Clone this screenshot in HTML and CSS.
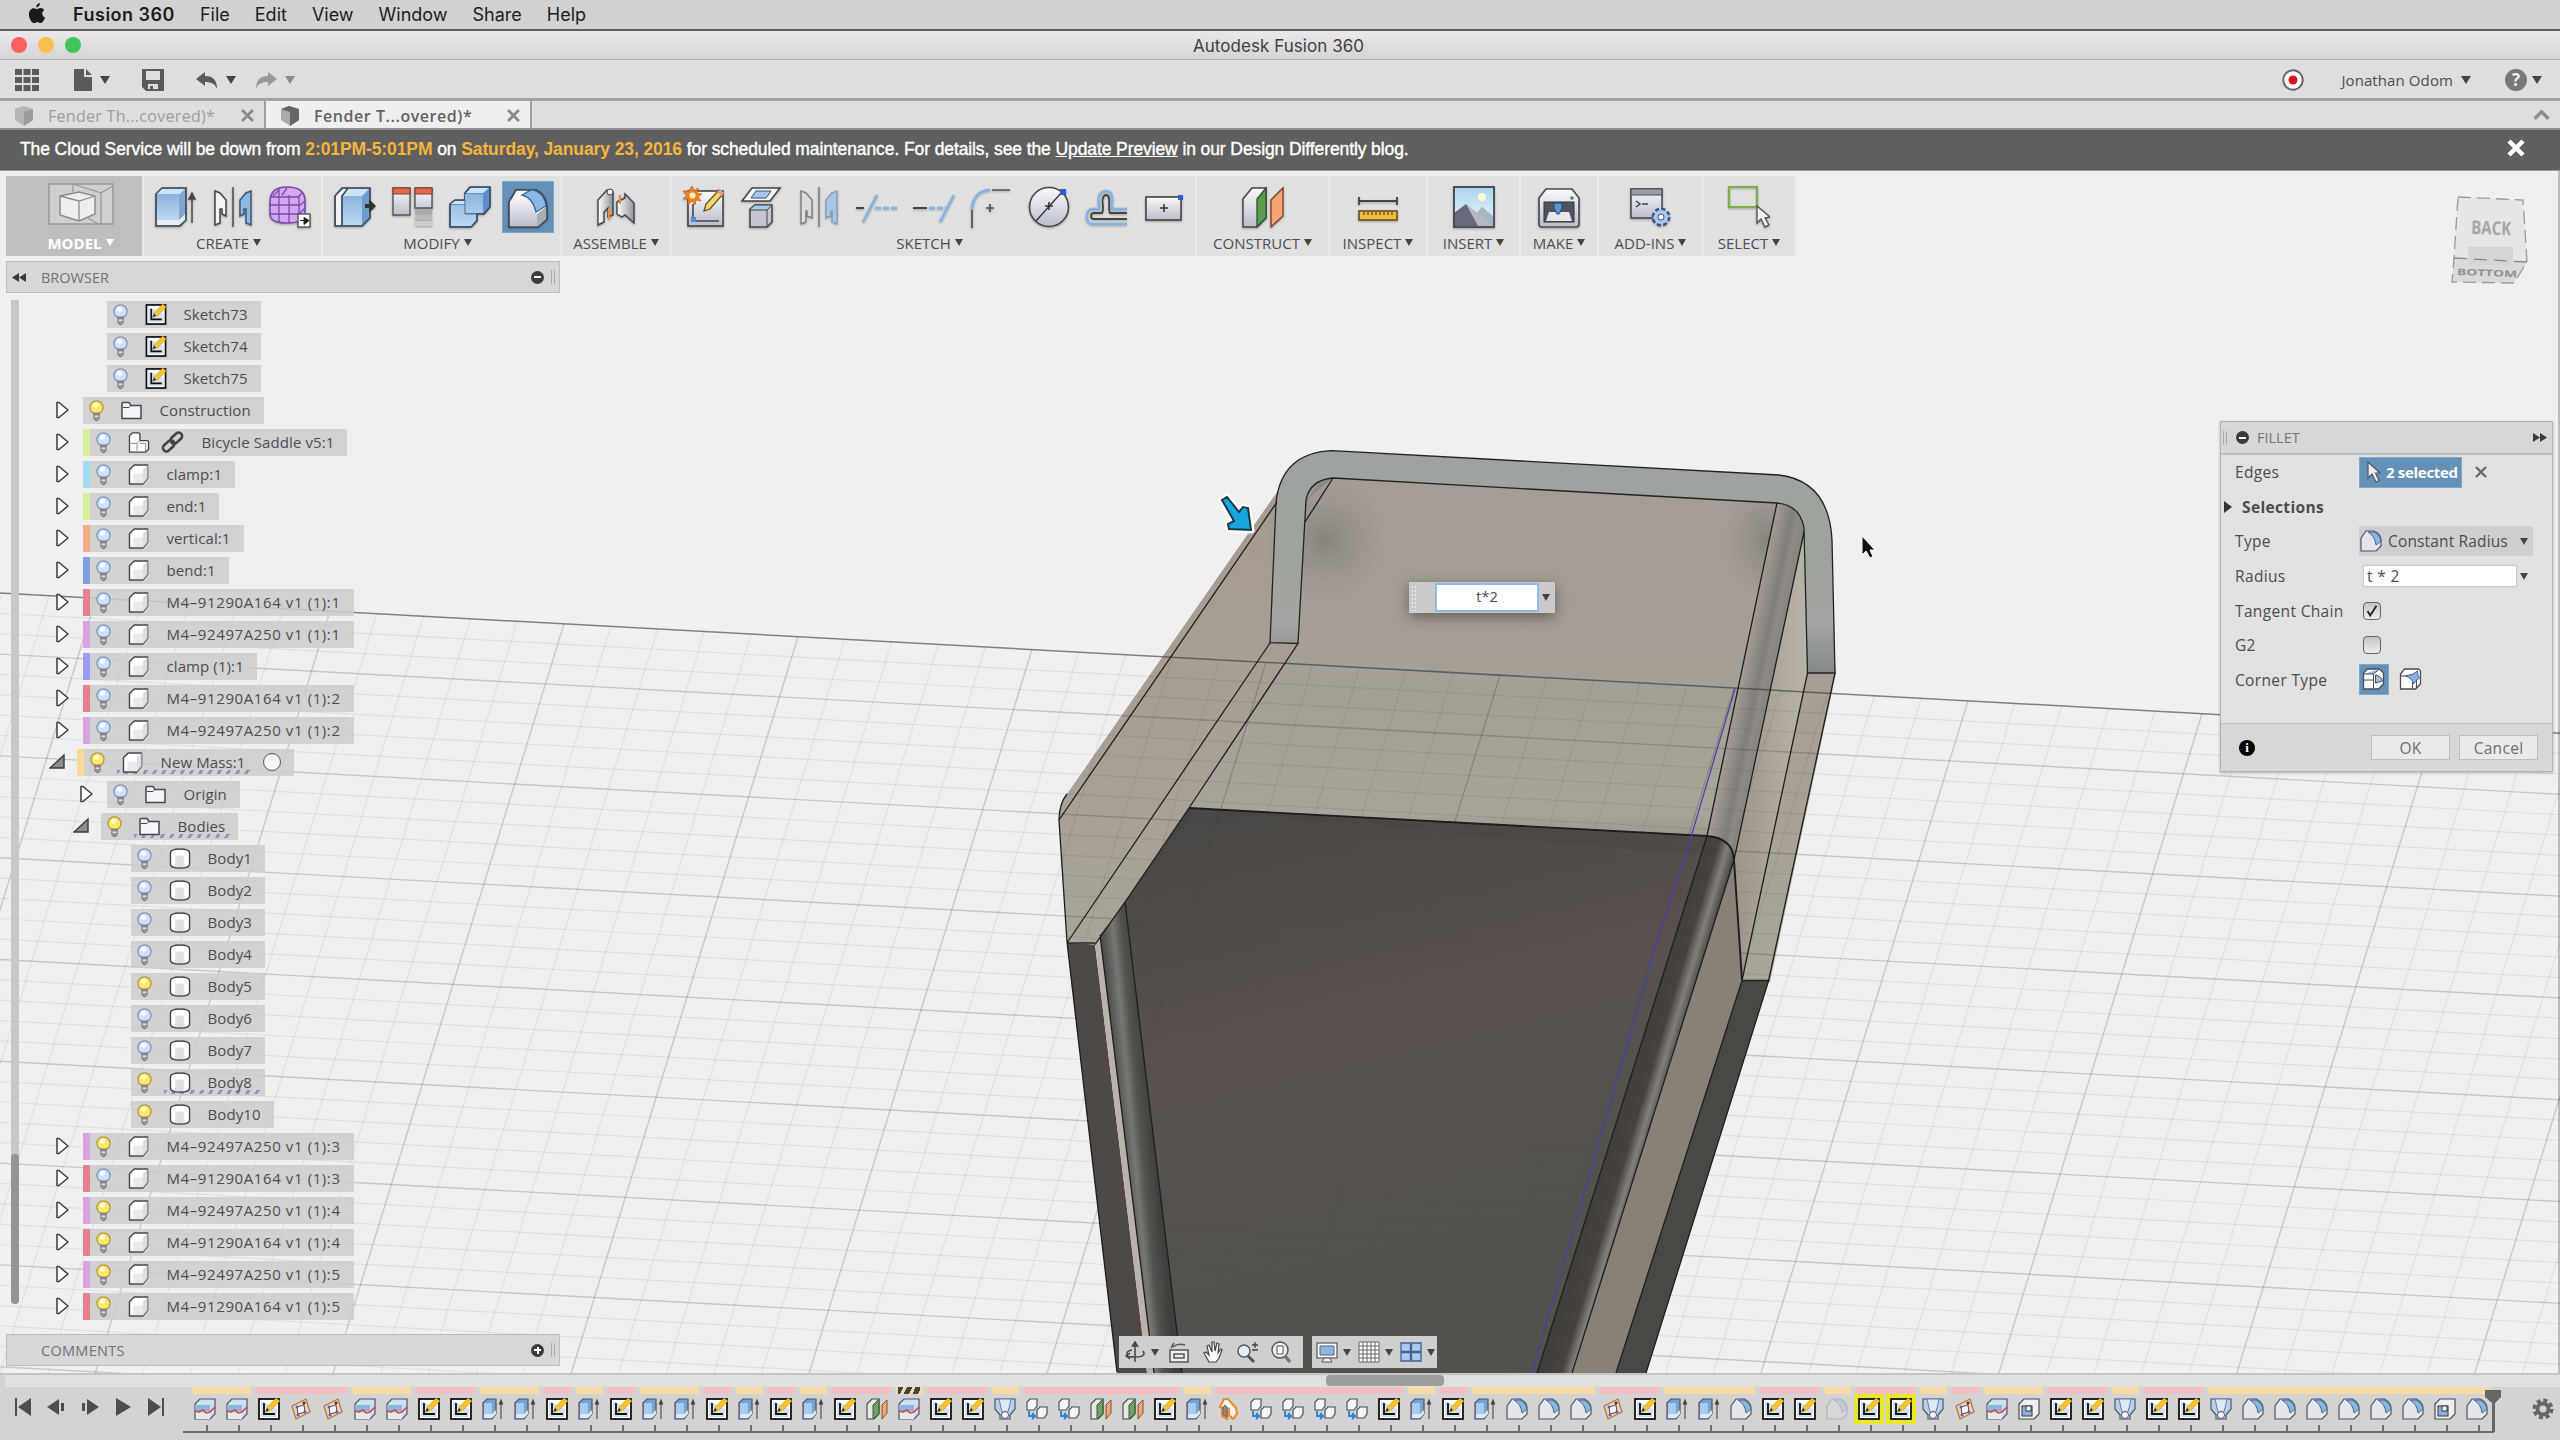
FILE: index.html
```html
<!DOCTYPE html>
<html lang="en">
<head>
    <meta charset="UTF-8">
    <title>Autodesk Fusion 360</title>
    <link rel="stylesheet" href="styles.css">
</head>
<body>
    <!-- shared icons -->
    <svg class="defs" width="0" height="0">
        <defs>
            <linearGradient id="gBlue" x1="0" y1="0" x2="0" y2="1"><stop offset="0" stop-color="#8db4dc"/><stop offset="1" stop-color="#bcd8f2"/></linearGradient>
            <linearGradient id="gGrey" x1="0" y1="0" x2="0" y2="1"><stop offset="0" stop-color="#fbfbfd"/><stop offset="1" stop-color="#b9bdcb"/></linearGradient>
            <linearGradient id="gSteel" x1="0" y1="0" x2="1" y2="0"><stop offset="0" stop-color="#fff"/><stop offset="1" stop-color="#8e939c"/></linearGradient>
            <linearGradient id="gSky" x1="0" y1="0" x2="0" y2="1"><stop offset="0" stop-color="#a9d4ee"/><stop offset="1" stop-color="#eef7fb"/></linearGradient>
        </defs>

        <!-- ribbon, 42px -->
        <symbol id="r-model" viewBox="0 0 66 42">
            <rect x="1" y="1" width="64" height="40" fill="#d0d0d0" stroke="#999" stroke-width="1.5"/>
            <path d="M25 1v8M25 1l28 9v31M53 10l12-7M40 35l10 6" fill="none" stroke="#999" stroke-width="1.3"/>
            <path d="M12 13l19-4 16 4v18l-16 7-19-6z" fill="#eee" stroke="#8c8c8c" stroke-width="1.5"/>
            <path d="M12 13l19 5 16-5M31 18v20" fill="none" stroke="#8c8c8c" stroke-width="1.3"/>
        </symbol>
        <symbol id="r-extrude" viewBox="0 0 42 42">
            <path d="M2 8l6-6h24v32l-6 6H2z" fill="#7fa6d0" stroke="#3c4654" stroke-width="1.6"/>
            <path d="M3 8h22v26H3z" fill="url(#gBlue)"/><path d="M3 8l5-5h23l-5 5z" fill="#cfe3f6"/>
            <path d="M3 34h22l6-6v6l-6 5H3z" fill="#e8eaf0"/>
            <path d="M38 37V8M35 13l3-6 3 6z" fill="#444" stroke="#444" stroke-width="1.4"/>
        </symbol>
        <symbol id="r-mirror" viewBox="0 0 42 42">
            <path d="M3 5l5 2 6 7v16l-4-2v-5H8v14l-5 2z" fill="#f4f5f8" stroke="#444" stroke-width="1.5"/>
            <path d="M39 5l-5 2-6 7v16l4-2v-5h2v14l5 2z" fill="#8fb8e0" stroke="#3c5878" stroke-width="1.5"/>
            <path d="M21 1v40" stroke="#555" stroke-width="1.6"/>
        </symbol>
        <symbol id="r-form" viewBox="0 0 42 42">
            <path d="M1 16C1 6 6 1 18 1s18 5 18 14v10c0 9-6 12-18 12S1 34 1 28z" fill="#d3a8f2" stroke="#7a4ba6" stroke-width="1.6"/>
            <path d="M1 19h29M2 11h27M1 28h29M10 2v34M20 9v28M30 10v24M4 10l6-6M29 11l5-5M30 20l6-5M30 28l6-6M13 9l5-7" fill="none" stroke="#7a4ba6" stroke-width="1.3"/>
            <rect x="29" y="28" width="12" height="13" fill="#fff" stroke="#555" stroke-width="1.4"/><path d="M31 34.5h4v-3l5 3-5 4v-4z" fill="#222" stroke="#222"/>
        </symbol>
        <symbol id="r-presspull" viewBox="0 0 42 42">
            <path d="M1 10l7-8h28v30l-8 8H1z" fill="#6f9ccc" stroke="#3c4654" stroke-width="1.6"/>
            <path d="M2 10h5v29H2zM2 10l7-7h4l-6 7z" fill="#f2f3f6"/><path d="M9 10h19v29H9z" fill="url(#gBlue)"/><path d="M9 10l5-7h21l-7 7z" fill="#cfe3f6"/>
            <path d="M8 40V10l6-8" fill="none" stroke="#3c4654" stroke-width="1.4"/>
            <path d="M31 18h4v-5l7 7-7 7v-5h-4z" fill="#333"/>
        </symbol>
        <symbol id="r-table" viewBox="0 0 42 42">
            <path d="M1 2h17v27H1zM23 2h17v20H23z" fill="url(#gGrey)" stroke="#555" stroke-width="1.4"/>
            <path d="M1 2h17v6H1zM23 2h17v6H23z" fill="#e06a4c" stroke="#8a3b28"/>
            <path d="M23 23h17v5H23z" fill="#aaa"/><path d="M23 29h17v5H23z" fill="#bbb"/><path d="M23 35h17v5H23z" fill="#ccc"/>
        </symbol>
        <symbol id="r-combine" viewBox="0 0 42 42">
            <path d="M1 18l5-4h10V7l5-6h20v20l-6 7h-7v7l-6 6H1z" fill="#5f8fc4" stroke="#34465c" stroke-width="1.6"/>
            <path d="M2 19h14v9h12-1v6l-5 6H2zM16 8h18v19H16z" fill="url(#gBlue)"/>
            <path d="M2 18l4-3h10v3zM17 7l5-5h18l-6 5z" fill="#cfe3f6"/><path d="M16 14v14h12" fill="none" stroke="#4a6b92"/>
        </symbol>
        <symbol id="r-fillet" viewBox="0 0 42 42">
            <path d="M2 41V16L9 4h20c7 3 11 9 11 20v9l-9 8z" fill="#fafafc" stroke="#39414d" stroke-width="1.6"/>
            <path d="M3 40V17c1-4 4-6 9-7 10 1 17 8 18 18v12z" fill="url(#gGrey)"/>
            <path d="M15 9l9-5c8 0 14 7 15 16l-10 6C27 17 23 11 15 9z" fill="#8db8e4" stroke="#3c6694" stroke-width="1.3"/>
            <path d="M30 28l9-7v12l-9 8z" fill="#a8acb8"/>
        </symbol>
        <symbol id="r-assemble" viewBox="0 0 42 42">
            <path d="M3 14l9-10 6 2v23l-5 2v-9l-4 4v10l-6 3z" fill="url(#gSteel)" stroke="#444" stroke-width="1.4"/>
            <path d="M22 16l8-4v-4l9 9v20l-9-8-3 2-5-3z" fill="url(#gSteel)" stroke="#444" stroke-width="1.4"/>
            <path d="M14 22v12M25 9v9" stroke="#f08a3c" stroke-width="2"/><circle cx="15" cy="6" r="3" fill="#eee" stroke="#444"/>
        </symbol>
        <symbol id="r-sketch" viewBox="0 0 42 42">
            <rect x="5" y="5" width="35" height="35" fill="url(#gGrey)" stroke="#444" stroke-width="1.6"/>
            <path d="M10 18v17h26" fill="none" stroke="#444" stroke-width="1.6"/><rect x="8" y="31" width="5" height="5" fill="#4b90d8"/>
            <path d="M21 25l2-7L36 4l4 4-13 15z" fill="#f5d468" stroke="#665326" stroke-width="1.3"/><path d="M34 6l5 4 2-3-4-4z" fill="#e59a8a"/>
            <path d="M9 0l2 5 4-3-1 5 5 1-4 3 3 4-5-1-1 5-3-4-4 4v-6l-5 0 4-4-4-4 6 0z" fill="#f08222" stroke="#b5521a" stroke-width=".6"/><circle cx="9.5" cy="9.5" r="3" fill="#fff3c4"/>
        </symbol>
        <symbol id="r-project" viewBox="0 0 42 42">
            <path d="M2 15L12 2h28L30 15z" fill="#f4f5f8" stroke="#444" stroke-width="1.5"/><path d="M11 12l5-7h15l-5 7z" fill="#a9c9ec" stroke="#37527a"/>
            <path d="M10 23l5-4h17v17l-5 5H10z" fill="#c3c6d0" stroke="#444" stroke-width="1.5"/><path d="M10 23l5-4h17l-5 5H10z" fill="#a9c9ec" stroke="#444"/><path d="M27 24v16" stroke="#444"/>
        </symbol>
        <symbol id="r-smirror" viewBox="0 0 42 42">
            <g opacity=".7"><path d="M3 5l5 2 6 7v18l-5-2v-5H8v11l-5 2z" fill="#eceef3" stroke="#666" stroke-width="1.5"/>
            <path d="M39 5l-5 2-6 7v18l5-2v-5h1v11l5 2z" fill="#a9cdf0" stroke="#6b93c0" stroke-width="1.5"/></g>
            <path d="M21 1v40" stroke="#777" stroke-width="1.4"/>
        </symbol>
        <symbol id="r-trim" viewBox="0 0 42 42"><path d="M1 22h8" stroke="#444" stroke-width="2"/><path d="M8 36L22 9" stroke="#86b2ea" stroke-width="2.5"/><path d="M20 22h22" stroke="#86b2ea" stroke-width="2.5" stroke-dasharray="6 2"/></symbol>
        <symbol id="r-extend" viewBox="0 0 42 42"><path d="M0 22h14" stroke="#444" stroke-width="2"/><path d="M27 36L41 9" stroke="#86b2ea" stroke-width="2.5"/><path d="M16 22h18" stroke="#86b2ea" stroke-width="2.5" stroke-dasharray="6 2"/></symbol>
        <symbol id="r-sfillet" viewBox="0 0 42 42"><path d="M2 24C2 12 9 4 20 4" fill="none" stroke="#86b2ea" stroke-width="2.5"/><path d="M2 24v18M22 4h18M16 22h8M20 18v8" stroke="#555" stroke-width="1.7"/></symbol>
        <symbol id="r-circle" viewBox="0 0 42 42"><circle cx="21" cy="21" r="19.5" fill="url(#gGrey)" stroke="#444" stroke-width="1.6"/><path d="M8 35L34 6" stroke="#333" stroke-width="1.3"/><path d="M17 20h8M21 16v8" stroke="#333" stroke-width="1.6"/><rect x="32" y="3" width="6" height="6" fill="#2b5fd0"/></symbol>
        <symbol id="r-offset" viewBox="0 0 42 42">
            <path d="M42 38H7c-7 0-7-15 0-15h7c1-4-1-8 0-12 2-8 12-8 13 0 1 4-1 8 0 12h15" fill="none" stroke="#86b2ea" stroke-width="2.5"/>
            <path d="M42 33H9c-4 0-4-6 0-6h8c3-5-1-11 1-15 1-4 5-4 6 0 1 5-1 11 1 15h17" fill="none" stroke="#444" stroke-width="1.8"/>
        </symbol>
        <symbol id="r-rect" viewBox="0 0 42 42"><rect x="3" y="11" width="35" height="23" fill="url(#gGrey)" stroke="#444" stroke-width="1.6"/><path d="M17 22h8M21 18v8" stroke="#333" stroke-width="1.5"/><rect x="35" y="9" width="5" height="5" fill="#2b5fd0"/></symbol>
        <symbol id="r-construct" viewBox="0 0 42 42">
            <path d="M1 13L10 2h14v30l-9 9H1z" fill="url(#gGrey)" stroke="#444" stroke-width="1.5"/><path d="M15 13l9-11v30l-9 9z" fill="#5c9a4e" stroke="#2e5427" stroke-width="1.3"/>
            <path d="M29 14L41 2v28L29 41z" fill="#f1a673" stroke="#7c4526" stroke-width="1.4"/>
        </symbol>
        <symbol id="r-inspect" viewBox="0 0 42 42"><path d="M2 15h38M2 11v8M40 11v8" stroke="#444" stroke-width="1.8"/><rect x="2" y="25" width="38" height="9" fill="#f0bd3e" stroke="#5e4a1a" stroke-width="1.5"/><path d="M7 26v3M11 26v3M15 26v3M19 26v3M23 26v3M27 26v3M31 26v3M35 26v3" stroke="#5e4a1a" stroke-width="1.3"/></symbol>
        <symbol id="r-insert" viewBox="0 0 42 42"><rect x="1" y="1" width="40" height="40" fill="url(#gSky)"/><circle cx="29" cy="11" r="4" fill="#fffbd6"/><path d="M21 30l8-9 11 9v10H21z" fill="#a5b5bf"/><path d="M1 27l12-9 11 11 13 11H1z" fill="#646a78"/><path d="M13 18l28 22H25z" fill="#b4b8c2"/><rect x="1" y="1" width="40" height="40" fill="none" stroke="#3f444f" stroke-width="1.8"/></symbol>
        <symbol id="r-make" viewBox="0 0 42 42"><path d="M1 12l7-9h26l7 9v26q0 3-3 3H4q-3 0-3-3z" fill="url(#gGrey)" stroke="#4a4d55" stroke-width="1.7"/><rect x="6" y="16" width="30" height="20" fill="#50545e" stroke="#333"/><path d="M11 26h20l3 9H8z" fill="#e6e8ec"/><path d="M16 17h8v5l-3 6h-2l-3-6z" fill="#5b95da" stroke="#28476e"/><circle cx="34" cy="12" r="1.8" fill="#3a9a3a"/></symbol>
        <symbol id="r-addins" viewBox="0 0 42 42"><rect x="1" y="3" width="31" height="29" fill="url(#gGrey)" stroke="#4a4d55" stroke-width="1.6"/><rect x="1" y="3" width="31" height="6" fill="#9a9da6" stroke="#4a4d55"/><path d="M6 15l4 3-4 3M12 18h6" fill="none" stroke="#444" stroke-width="1.5"/><circle cx="31" cy="31" r="8" fill="#a9c6ec" stroke="#3a557e" stroke-width="3" stroke-dasharray="4 2.3"/><circle cx="31" cy="31" r="7" fill="#a9c6ec"/><circle cx="31" cy="31" r="3" fill="#fff" stroke="#3a557e"/></symbol>
        <symbol id="r-select" viewBox="0 0 42 42"><rect x="1" y="1" width="28" height="20" fill="none" stroke="#7db04a" stroke-width="2"/><path d="M29 20v17l4-4 4 8 4-2-4-7 5-1z" fill="#f2f2f6" stroke="#555" stroke-width="1.4"/></symbol>

        <!-- tree -->
        <symbol id="t-bulb" viewBox="0 0 14 20"><circle cx="7" cy="7" r="6.2" fill="#cfdfff" stroke="#7f92b8" stroke-width="1.2"/><circle cx="6" cy="5" r="2.5" fill="#fff" opacity=".8"/><path d="M4.500 12.500h5v5l-1.500 2h-2l-1.500-2z" fill="#9a9a9a" stroke="#666" stroke-width=".8"/><path d="M5 15.500h4" stroke="#eee"/></symbol>
        <symbol id="t-bulb-on" viewBox="0 0 14 20"><circle cx="7" cy="7" r="6.2" fill="#ffe768" stroke="#b4963a" stroke-width="1.2"/><circle cx="6" cy="5" r="2.5" fill="#fffbd8" opacity=".9"/><path d="M4.500 12.500h5v5l-1.500 2h-2l-1.500-2z" fill="#9a9a9a" stroke="#666" stroke-width=".8"/><path d="M5 15.500h4" stroke="#eee"/></symbol>
        <symbol id="t-sketch" viewBox="0 0 22 22"><rect x="1" y="1" width="20" height="20" fill="#fff" stroke="#111" stroke-width="1.8"/><path d="M3 19V3l16 8v8z" fill="#cfe3f3"/><path d="M6 5v11h11" fill="none" stroke="#111" stroke-width="1.8"/><path d="M7.500 14l2-5L18 0l4 3-9 9z" fill="#f6c62c" stroke="#a07c1a" stroke-width=".5"/><path d="M7.500 14l1.500-4 2 2z" fill="#333"/></symbol>
        <symbol id="t-folder" viewBox="0 0 22 20"><path d="M1 18V3q0-1 1-1h6l2 3h10v13z" fill="#f4f5f8" stroke="#444954" stroke-width="1.5"/><path d="M2 7h6l2-2" fill="none" stroke="#444954"/></symbol>
        <symbol id="t-comp" viewBox="0 0 22 22"><path d="M1 6l5-5h14v14l-5 6H1z" fill="#fdfdfe" stroke="#42464e" stroke-width="1.5" stroke-linejoin="round"/><path d="M15 6l5-5v14l-5 6z" fill="#d9dbe0" opacity=".9"/><path d="M5 10h10v10H5z" fill="#e9eaee"/></symbol>
        <symbol id="t-asm" viewBox="0 0 22 22"><path d="M1 4l3-3h7l1 1v7h8l1 1v8l-3 3H1z" fill="#fdfdfe" stroke="#42464e" stroke-width="1.4" stroke-linejoin="round"/><path d="M1 12h8v8M9 12l3-3M12 12h6v8" fill="none" stroke="#8a8e96"/></symbol>
        <symbol id="t-body" viewBox="0 0 22 22"><path d="M1 5C1 2 6 1 11 1s10 1 10 4v12c0 3-5 4-10 4S1 20 1 17z" fill="#fff" stroke="#42464e" stroke-width="1.5"/><path d="M6 8h9v12H6z" fill="#dfe0e5"/></symbol>
        <symbol id="t-link" viewBox="0 0 24 22"><g fill="none" stroke="#444" stroke-width="2.6"><rect x="9" y="4" width="13" height="7" rx="3.5" transform="rotate(-42 15 7.5)"/><rect x="1" y="11" width="13" height="7" rx="3.5" transform="rotate(-42 8 14.5)"/></g></symbol>
        <symbol id="t-caret" viewBox="0 0 16 18"><path d="M2 1.500h2L13 9 4 16.500H2z" fill="#fafafa" stroke="#3b3b3b" stroke-width="1.5" stroke-linejoin="round"/></symbol>
        <symbol id="t-open" viewBox="0 0 16 18"><path d="M15 2v13H1z" fill="#8b8b8b" stroke="#3b3b3b" stroke-width="1.4"/></symbol>

        <!-- timeline -->
        <symbol id="tl-S" viewBox="0 0 22 22"><path d="M1 6l5-5h15v15l-5 5H1z" fill="#cfe0f2" stroke="#4a5566" stroke-width="1.2"/><path d="M1 7h15v6H1z" fill="#8fb4dc"/><path d="M2 15h14v6H2z" fill="#e6e7ec"/><path d="M1 13l4 1 4-2 3 3 4-1 5-5" fill="none" stroke="#cf4040" stroke-width="1.5"/></symbol>
        <symbol id="tl-E" viewBox="0 0 22 22"><path d="M1 5l4-4h9v15l-4 5H1z" fill="#7aa3d2" stroke="#4a5566" stroke-width="1.2"/><path d="M2 5h8v11H2z" fill="#a9cbee"/><path d="M2 16h8l4-4v4l-4 4H2z" fill="#e6e7ec"/><path d="M19 21V3M17.500 6l1.500-4 1.500 4z" fill="#444" stroke="#444" stroke-width="1.1"/></symbol>
        <symbol id="tl-P" viewBox="0 0 22 22"><path d="M2 8L16 1l4 13L6 21z" fill="#f7cdb0" stroke="#b0714c" stroke-width="1.2"/><path d="M7 9l7-2 1 7-7 2z" fill="#f2f3fa" stroke="#555"/><circle cx="7" cy="9" r="1.5" fill="#3a69c8"/><circle cx="15" cy="14" r="1.5" fill="#3a69c8"/><circle cx="8" cy="17" r="1.5" fill="#3a69c8"/><circle cx="14" cy="5" r="1.5" fill="#333"/></symbol>
        <symbol id="tl-C" viewBox="0 0 22 22"><path d="M1 6l5-5h7v15l-5 5H1z" fill="#e8e9ee" stroke="#444" stroke-width="1.1"/><path d="M7 7l6-6v15l-6 5z" fill="#6ea35f" stroke="#355a2c"/><path d="M16 7l5-5v13l-5 6z" fill="#f1a673" stroke="#8a4c2a"/></symbol>
        <symbol id="tl-V" viewBox="0 0 22 22"><path d="M1 1h20v10l-5 6v4h-10v-4L1 11z" fill="#b9cee8" stroke="#4a5566" stroke-width="1.2"/><path d="M5 1l3 13h6l3-13z" fill="#dce9f8" stroke="#6781a6"/><circle cx="11" cy="17" r="3.5" fill="#fff" stroke="#4a5566"/></symbol>
        <symbol id="tl-J" viewBox="0 0 22 22"><path d="M1 4l3-3h7v7l-3 4H1zM11 12l3-3h7v7l-3 4h-7z" fill="#f4f5f8" stroke="#4a4d55" stroke-width="1.2"/><path d="M3 13v5h6M6 15l3 3-3 3" fill="none" stroke="#2f83d6" stroke-width="2"/></symbol>
        <symbol id="tl-H" viewBox="0 0 22 22"><path d="M2 9l4-8h4l8 9 1 6-4 5-4-4V11l-2 1v9l-5-3v-8z" fill="#f5f5f5" stroke="#ef8d2c" stroke-width="2.2"/><path d="M4 10l3-3 3 3-1 1v8l-4-2v-7z" fill="#8b8b8b" stroke="#555" stroke-width=".8"/></symbol>
        <symbol id="tl-F" viewBox="0 0 22 22"><path d="M1 21V8l5-7h8q7 3 7 9v6l-5 5z" fill="#e4e6ec" stroke="#4a5566" stroke-width="1.2"/><path d="M8 2h6q6 3 7 9l-5 4Q15 6 8 2z" fill="#8db4e0" stroke="#46678e"/></symbol>
        <symbol id="tl-B" viewBox="0 0 22 22"><path d="M1 6l5-5h15v15l-5 5H1z" fill="#eeeff3" stroke="#4a4d55" stroke-width="1.2"/><rect x="4" y="8" width="10" height="10" fill="#8db4e0" stroke="#333"/><rect x="8" y="8" width="5" height="5" fill="#fff" stroke="#333"/></symbol>
    </svg>

    <div class="menubar">
        <svg class="apple" viewBox="0 0 18 22"><path d="M12 0c.3 2.400-1.700 4.600-3.700 4.600C8 2.400 9.900.4 12 0zM9 6.300c1 0 2-1.100 3.800-1.100 1.500 0 3 .8 3.900 2.100-3.300 2-2.800 6.600.8 7.900-.7 2.200-2.700 5.800-4.700 5.800-1.300 0-1.800-.8-3.400-.8s-2.200.8-3.400.8C3.500 21 .5 16.300.5 12 .5 8 3 5.400 5.500 5.400c1.500 0 2.600.9 3.500.9z"/></svg>
        <b>Fusion 360</b><span>File</span><span>Edit</span><span>View</span><span>Window</span><span>Share</span><span>Help</span>
    </div>
    <div class="titlebar">
        <div class="lights"><i class="red"></i><i class="yellow"></i><i class="green"></i></div>
        <span class="title">Autodesk Fusion 360</span>
    </div>
    <div class="quickbar">
        <svg class="q-grid" viewBox="0 0 24 24" fill="#5a5a5a"><path d="M0 1h7v6H0zM8.500 1h7v6h-7zM17 1h7v6h-7zM0 9h7v6H0zM8.500 9h7v6h-7zM17 9h7v6h-7zM0 17h7v6H0zM8.500 17h7v6h-7zM17 17h7v6h-7z"/></svg>
        <svg class="q-file" viewBox="0 0 18 22" fill="#5a5a5a"><path d="M0 0h10v8h8v14H0zM12 0l6 6h-6z"/></svg><i class="down"></i>
        <svg class="q-save" viewBox="0 0 22 22"><path d="M0 0h22v22H4l-4-4z" fill="#5a5a5a"/><path d="M4 2h14v9H4zM6 15h10v5H6z" fill="#dedede"/><path d="M8 17h3v3H8z" fill="#5a5a5a"/></svg>
        <svg class="q-undo" viewBox="0 0 22 18"><path d="M0 8l9-7v4c8 0 12 4 12 13-2-5-5-7-12-7v4z" fill="#5a5a5a"/></svg><i class="down"></i>
        <svg class="q-redo" viewBox="0 0 22 18"><path d="M22 8l-9-7v4C5 5 1 9 1 18c2-5 5-7 12-7v4z" fill="#999"/></svg><i class="down dim"></i>
        <div class="account">
            <svg class="rec" viewBox="0 0 22 22"><circle cx="11" cy="11" r="9.7" fill="#fff" stroke="#666" stroke-width="2"/><circle cx="11" cy="11" r="4.5" fill="#d3171e"/></svg>
            <span>Jonathan Odom</span><i class="down"></i>
            <span class="help">?</span><i class="down"></i>
        </div>
    </div>
    <div class="tabs">
        <div class="tab"><svg viewBox="0 0 18 20"><path d="M0 3l8-3 10 3v11l-9 6-9-6z" fill="#b5b5b5"/><path d="M9 6l9-3v11l-9 6z" fill="#9c9c9c"/></svg><span>Fender Th...covered)*</span><svg class="close" viewBox="0 0 12 12"><path d="M1 1l10 10M11 1L1 11"/></svg></div>
        <div class="tab active"><svg viewBox="0 0 18 20"><path d="M0 3l8-3 10 3v11l-9 6-9-6z" fill="#aaa"/><path d="M0 3l8-3 10 3v11l-9 6V6z" fill="#666"/></svg><span>Fender T...overed)*</span><svg class="close" viewBox="0 0 12 12"><path d="M1 1l10 10M11 1L1 11"/></svg></div>
        <svg class="collapse" viewBox="0 0 16 11"><path d="M1.500 9L8 2.500 14.500 9"/></svg>
    </div>
    <div class="banner">
        <p>The Cloud Service will be down from <b>2:01PM-5:01PM</b> on <b>Saturday, January 23, 2016</b> for scheduled maintenance. For details, see the <u>Update Preview</u> in our Design Differently blog.</p>
        <svg viewBox="0 0 20 20"><path d="M3 3l14 14M17 3L3 17"/></svg>
    </div>

    <div class="workspace">
        <svg class="scene" viewBox="0 171 2560 1202">
            <defs>
                <linearGradient id="mWall" x1="0" y1="0" x2="0" y2="1"><stop offset="0" stop-color="#a39d96"/><stop offset=".55" stop-color="#a5a096"/><stop offset=".88" stop-color="#a8a499"/><stop offset="1" stop-color="#928c85"/></linearGradient>
                <linearGradient id="mSide" x1="0" y1="0" x2="0" y2="1"><stop offset="0" stop-color="#a69a90"/><stop offset="1" stop-color="#a8a599"/></linearGradient>
                <linearGradient id="mRim" x1="0" y1="0" x2="0" y2="1"><stop offset="0" stop-color="#9da39f"/><stop offset=".5" stop-color="#9fa39d"/><stop offset=".78" stop-color="#a3a5a2"/><stop offset="1" stop-color="#828984"/></linearGradient>
                <linearGradient id="mFloor" x1="0" y1="0" x2=".25" y2="1"><stop offset="0" stop-color="#403f3d"/><stop offset=".45" stop-color="#534b48"/><stop offset=".65" stop-color="#4f4c48"/><stop offset="1" stop-color="#4c4b45"/></linearGradient>
                <linearGradient id="mBend" gradientUnits="userSpaceOnUse" x1="1625" y1="1090" x2="1662" y2="1101"><stop offset="0" stop-color="#403e3c"/><stop offset=".5" stop-color="#47423f"/><stop offset=".75" stop-color="#838079"/><stop offset="1" stop-color="#4a4643"/></linearGradient>
                <linearGradient id="mBendTop" gradientUnits="userSpaceOnUse" x1="1742" y1="670" x2="1771" y2="676"><stop offset="0" stop-color="#a29c94"/><stop offset=".6" stop-color="#817d78"/><stop offset=".8" stop-color="#8c8b89"/><stop offset="1" stop-color="#8a857e"/></linearGradient>
                <linearGradient id="mLeft" gradientUnits="userSpaceOnUse" x1="1118" y1="1100" x2="1150" y2="1097"><stop offset="0" stop-color="#4e4e4c"/><stop offset=".35" stop-color="#777774"/><stop offset=".6" stop-color="#555350"/><stop offset="1" stop-color="#403e3c"/></linearGradient>
                <linearGradient id="mBeige" x1="0" y1="0" x2="1" y2="0"><stop offset="0" stop-color="#9b958a"/><stop offset="1" stop-color="#b9b4a8"/></linearGradient>
                <radialGradient id="mShade"><stop offset="0" stop-color="#6b6963" stop-opacity=".5"/><stop offset=".5" stop-color="#7a7771" stop-opacity=".28"/><stop offset="1" stop-color="#8b8680" stop-opacity="0"/></radialGradient>
            </defs>
            <!-- upper half, seen through the grid -->
            <path d="M1277 492L1067 794q-8 10-8 26l8 122 28 2 100-135 540 50 8 122 27 1 66-309L1815 500 1780 480l-460-20z" fill="url(#mSide)"/>
            <path d="M1333 478L1777 503 1804 528 1733 860 1707 836 1189 808 1298 643 1306 498z" fill="url(#mWall)"/>
            <ellipse cx="1325" cy="540" rx="62" ry="62" fill="url(#mShade)"/>
            <ellipse cx="1768" cy="540" rx="46" ry="62" fill="url(#mShade)"/>
            <path d="M1777 503Q1800 505 1804 532L1734 856Q1727 838 1707 836z" fill="url(#mBendTop)"/>
            <path d="M1804 532L1807.500 673 1742 980 1734 856z" fill="url(#mBeige)"/>
            <path d="M1333 478Q1308 481 1305 519L1298 560 1306 500z" fill="#8c8983"/>
            <g id="grid"></g>
            <path d="M1332 450.700L1779 475Q1829 481 1832 540L1835 673H1807.500L1804 528Q1800 505 1777 503L1333 478Q1310 480 1306 500L1298 643.500 1270 642.700 1276 503Q1281 453 1332 450.700z" fill="url(#mRim)" stroke="#222" stroke-width="1.3"/>
            <!-- lower half -->
            <path d="M1189 808L1707 836 1537 1373H1182L1125 902z" fill="url(#mFloor)" opacity=".96"/>
            <path d="M1707 836Q1733 838 1734 860L1572 1373H1537z" fill="url(#mBend)"/>
            <path d="M1734 860L1742 980 1616 1373H1572z" fill="#878177"/>
            <path d="M1742 980.500L1768.500 981 1646 1373H1616z" fill="#4a4844"/>
            <path d="M1067 943L1095 944.600 1147 1373H1117z" fill="#4e4946"/>
            <path d="M1095 944.600L1100 935 1154 1373H1147z" fill="#b9b3ab"/>
            <path d="M1100 935L1125 902 1182 1373H1154z" fill="url(#mLeft)"/>
            <g fill="none" stroke="#1f1d1b" stroke-width="1.3">
                <path d="M1277 502L1059 820M1270 643L1067 943M1298 643.500L1189 808 1125 902 1095 944.600M1067 943H1095M1067 794q-8 10-8 26l8 122 50 430M1125 902L1182 1373M1100 935L1154 1373"/>
                <path d="M1777 503L1707 836 1537 1373M1804 532L1734 860 1572 1373M1807.500 673L1742 980.500 1616 1373M1835 673L1768.500 981 1646 1373M1742 980.500H1768.500"/>
                <path d="M1333 478L1305 522"/>
                <path d="M1189 808L1707 836Q1733 838 1734 860L1742 980" stroke-width="1.9"/>
            </g>
            <path d="M1735 689L1691 837 1656 945 1594 1159 1531.700 1373" fill="none" stroke="#4440a8" stroke-width="1.2"/>
            <!-- direction handle and pointer -->
            <path d="M1222 500l5-3 12 15 4-5 5 1 3 22-22-1-1-5 6-3z" fill="#19a6e0" stroke="#fff" stroke-width="7" stroke-linejoin="round"/>
            <path d="M1222 500l5-3 12 15 4-5 5 1 3 22-22-1-1-5 6-3z" fill="#19a6e0" stroke="#143848" stroke-width="2"/>
            <path d="M1862 536v19l4-4 4 7 3-1.500-3-6.500h5z" fill="#111" stroke="#fff" stroke-width="1"/>
        </svg>

        <div class="ribbon" id="ribbon"></div>

        <svg class="viewcube" viewBox="2448 190 86 98">
            <path d="M2458 197l65 3 4 62-73-4z" fill="#e6e6e6"/><path d="M2454 258l73 4-13 21-62-1z" fill="#dadada"/>
            <path d="M2468 247h45v18h-45z" fill="#d3d6d8"/>
            <path d="M2458 197l65 3 4 62-13 21-62-1 2-24z" fill="none" stroke="#999" stroke-width="1.3" stroke-dasharray="13 6"/>
            <path d="M2454 258l73 4" stroke="#888" stroke-width="1.3" stroke-dasharray="13 7"/>
            <text x="2471" y="234" class="cube-back" textLength="40" lengthAdjust="spacingAndGlyphs" transform="rotate(2 2471 234)">BACK</text>
            <text x="2457" y="275" class="cube-bottom" textLength="60" lengthAdjust="spacingAndGlyphs" transform="rotate(2 2457 275)">BOTTOM</text>
        </svg>

        <div class="browser">
            <div class="panel-head"><svg class="rewind" viewBox="0 0 14 9"><path d="M7 0v9L0 4.500zM14 0v9L7 4.500z"/></svg><span>BROWSER</span><i class="minus"></i><i class="grip"></i></div>
            <div class="tree-wrap">
                <div class="tree-scroll"><div class="tree-thumb"></div></div>
                <div class="tree" id="tree"></div>
            </div>
            <div class="panel-head comments"><span>COMMENTS</span><i class="minus plus"></i><i class="grip"></i></div>
        </div>

        <div class="float-input"><i class="dots"></i><span class="field">t*2</span><i class="down small"></i></div>

        <div class="dialog">
            <div class="dialog-head"><i class="grip"></i><i class="minus"></i><span>FILLET</span><svg class="forward" viewBox="0 0 14 9"><path d="M0 0v9l7-4.500zM7 0v9l7-4.500z"/></svg></div>
            <div class="dialog-body">
                <div class="field-row"><label>Edges</label><div class="picker"><svg viewBox="0 0 14 22"><path d="M1 1v16l4-4 4 8 3-1.500-3.500-7.500H13z" fill="#e9edf2" stroke="#4c5864" stroke-width="1.2"/></svg>2 selected</div><svg class="clear" viewBox="0 0 12 12"><path d="M1 1l10 10M11 1L1 11"/></svg></div>
                <div class="field-row section"><i class="right"></i><b>Selections</b></div>
                <div class="field-row"><label>Type</label><div class="dropdown"><svg viewBox="0 0 22 22"><use href="#tl-F"/></svg><span>Constant Radius</span><i class="down small"></i></div></div>
                <div class="field-row"><label>Radius</label><div class="text">t * 2</div><i class="down small"></i></div>
                <div class="field-row"><label>Tangent Chain</label><div class="check"><svg viewBox="0 0 18 18"><path d="M4 9l3 5 7-11"/></svg></div></div>
                <div class="field-row"><label>G2</label><div class="check"></div></div>
                <div class="field-row"><label>Corner Type</label>
                    <div class="corner on"><svg viewBox="0 0 22 22"><path d="M1 5l4-4h12l4 4v11l-5 5H1z" fill="#fff" stroke="#4a4d55" stroke-width="1.3"/><path d="M1 12h10M11 6v15M1 6h10l6-5M13 7q6 1 7 6l-7 2z" fill="#9dbde6" stroke="#4a4d55"/></svg></div>
                    <div class="corner"><svg viewBox="0 0 22 22"><path d="M1 6l4-5h14l2 2v13l-5 5H1z" fill="#fff" stroke="#4a4d55" stroke-width="1.3"/><path d="M1 8h7M13 14v7M17 11v9" fill="none" stroke="#4a4d55"/><path d="M6 8q8-1 12-5 0 5 2 7-4 2-6 6-1-6-8-8z" fill="#8db0e6" stroke="#3b5f9c"/></svg></div>
                </div>
            </div>
            <div class="dialog-foot"><span class="info">i</span><button>OK</button><button>Cancel</button></div>
        </div>

        <div class="navbar">
            <div class="nav-group">
                <svg viewBox="0 0 22 22" fill="none" stroke="#444" stroke-width="1.5"><path d="M11 2v19M8.500 5l2.500-4 2.500 4z" fill="#fff"/><path d="M19 10q4 6-8 6-6 0-8-1M8 9Q2 10 3 14M6 12l-4 3 4 3"/></svg><i class="down small"></i>
                <svg viewBox="0 0 22 22" fill="#eee" stroke="#555" stroke-width="1.5"><path d="M2 9h18v12H2z"/><path d="M6 13h10v4H6zM3 7l3-5M5 6q5-4 12-2" fill="none"/></svg>
                <svg viewBox="0 0 22 22"><path d="M7 21l-5-9 2-1 3 3-2-9 2-1 3 7V1h2l1 9 2-8 2 1-1 9 3-4 1 1-3 8-3 4z" fill="#fff" stroke="#444" stroke-width="1.2"/></svg>
                <svg viewBox="0 0 22 22"><circle cx="8" cy="10" r="6" fill="#e4eefa" stroke="#555" stroke-width="1.4"/><path d="M12 15l6 6" stroke="#555" stroke-width="3"/><path d="M16 4h6M19 1v6M16 9h6" stroke="#444" stroke-width="1.3"/></svg>
                <svg viewBox="0 0 22 22"><circle cx="10" cy="9" r="8" fill="#eee" stroke="#555" stroke-width="1.4"/><path d="M7 5h6v8H7z" fill="#fff" stroke="#555"/><path d="M15 15l5 6" stroke="#777" stroke-width="3.5"/></svg>
            </div>
            <div class="nav-group views">
                <svg viewBox="0 0 22 22"><rect x="1" y="2" width="20" height="15" fill="#fff" stroke="#555" stroke-width="1.2"/><path d="M4 5h14v9H4z" fill="#8fb4e2" stroke="#46678e"/><path d="M8 17h6l2 4H6z" fill="#eee" stroke="#555"/></svg><i class="down small"></i>
                <svg viewBox="0 0 22 22"><path d="M1 1h20v20H1zM5 1v20M9 1v20M13 1v20M17 1v20M1 5h20M1 9h20M1 13h20M1 17h20" fill="#fff" stroke="#666"/></svg><i class="down small"></i>
                <svg viewBox="0 0 22 22"><path d="M1 2h9.500v8.500H1zM11.500 2H21v8.500h-9.500zM1 11.500h9.500V20H1zM11.500 11.500H21V20h-9.500z" fill="#a9c9f0" stroke="#46618e" stroke-width="1.3"/></svg><i class="down small"></i>
            </div>
        </div>
    </div>

    <div class="timeline">
        <div class="tl-scroll"><div class="tl-thumb"></div></div>
        <div class="tl-main">
            <div class="playback">
                <svg viewBox="0 0 18 20"><path d="M1 1h2v18H1zM17 1v18L4 10z"/></svg>
                <svg viewBox="0 0 18 20"><path d="M11 2v16L-1 10zM13 6h3v8h-3z"/></svg>
                <svg viewBox="0 0 18 20"><path d="M6 2v16l12-8zM1 6h3v8H1z"/></svg>
                <svg viewBox="0 0 18 20"><path d="M1 1v18l15-9z"/></svg>
                <svg viewBox="0 0 18 20"><path d="M0 1v18l13-9zM14 1h2v18h-2z"/></svg>
            </div>
            <div class="track" id="track"></div>
            <svg class="marker" viewBox="0 0 16 44"><path d="M0 0h16v7l-6 6v29H7V13L0 7z"/></svg>
            <svg class="gear" viewBox="0 0 22 22"><circle cx="11" cy="11" r="8.5" stroke-dasharray="4 2.68"/><circle cx="11" cy="11" r="5.5"/></svg>
        </div>
    </div>

    <script src="script.js"></script>
</body>
</html>
```
FILE: styles.css
```css
* {
    box-sizing: border-box;
}
body {
    margin: 0;
    width: 2560px;
    height: 1440px;
    overflow: hidden;
    display: flex;
    flex-direction: column;
    background: #f0f0f0;
    color: #4b4d52;
    font-family: 'Open Sans', 'Noto Sans', sans-serif;
    font-size: 15px;
}
svg {
    display: block;
    flex: none;
}
.defs {
    position: absolute;
}
.down {
    width: 0;
    height: 0;
    border: 5px solid transparent;
    border-top: 8px solid #444;
    border-bottom: 0;
}
.down.dim {
    border-top-color: #8c8c8c;
}
.down.small {
    border-width: 7px 4px 0;
}

/* top bars */
.menubar {
    height: 31px;
    display: flex;
    align-items: center;
    gap: 25px;
    padding-left: 28px;
    background: #d1d1d1;
    border-bottom: 2px solid #5c6058;
    color: #1c1c1c;
    font-family: Inter, sans-serif;
    font-size: 18px;
}
.menubar b {
    margin-left: 2px;
    font-weight: 600;
    letter-spacing: .5px;
}
.apple {
    width: 18px;
    height: 21px;
    margin-top: -2px;
    fill: #1a1a1a;
}
.titlebar {
    height: 29px;
    display: flex;
    align-items: center;
    background: linear-gradient(#ebe8ec, #d6d4d7);
    border-bottom: 1px solid #b0b0b0;
    font-family: Inter, sans-serif;
    font-size: 17px;
    color: #3f3f42;
}
.lights {
    display: flex;
    gap: 11px;
    width: 100px;
    padding-left: 11px;
}
.lights i {
    width: 16px;
    height: 16px;
    border-radius: 50%;
}
.red { background: #fb605f; }
.yellow { background: #fdbe4b; }
.green { background: #3ec756; }
.title {
    flex: 1;
    text-align: center;
    padding: 2px 103px 0 0;
    letter-spacing: .05px;
}
.quickbar {
    height: 41px;
    display: flex;
    align-items: center;
    padding: 1px 0 0 15px;
    background: #dedede;
    border-bottom: 3px solid #a2a2a2;
}
.q-grid { width: 24px; height: 24px; }
.q-file { width: 18px; height: 22px; margin-left: 35px; }
.q-save { width: 22px; height: 22px; margin-left: 32px; }
.q-undo { width: 22px; height: 18px; margin-left: 32px; }
.q-redo { width: 22px; height: 18px; margin-left: 19px; }
.quickbar .down { margin-left: 8px; }
.account {
    flex: 1;
    display: flex;
    align-items: center;
    justify-content: flex-end;
    padding-right: 18px;
    letter-spacing: .1px;
}
.rec {
    width: 22px;
    height: 22px;
    margin-right: 37px;
}
.help {
    width: 22px;
    height: 22px;
    margin-left: 34px;
    border-radius: 50%;
    background: #777;
    color: #eee;
    font-weight: 700;
    font-size: 17px;
    line-height: 22px;
    text-align: center;
}
.account .help + .down {
    margin-left: 5px;
}
.tabs {
    height: 29px;
    display: flex;
    background: #dedede;
    border-bottom: 2px solid #8f8f8f;
}
.tab {
    width: 266px;
    display: flex;
    align-items: center;
    padding: 2px 10px 0 13px;
    border-right: 2px solid #a0a0a0;
    color: #9d9d9d;
    font-size: 16px;
    letter-spacing: .3px;
    white-space: nowrap;
}
.tab svg {
    width: 22px;
    height: 20px;
}
.tab span {
    flex: 1;
    padding-left: 13px;
}
.tab.active {
    background: #efefef;
    color: #636363;
    font-weight: 600;
    letter-spacing: .55px;
}
.tab .close {
    width: 13px;
    height: 13px;
    stroke: #8a8a8a;
    stroke-width: 2.6;
}
.collapse {
    width: 17px;
    height: 12px;
    margin: 8px 10px 0 auto;
    fill: none;
    stroke: #8c8c8c;
    stroke-width: 3.2;
}
.banner {
    height: 41px;
    display: flex;
    align-items: center;
    justify-content: space-between;
    padding: 0 34px 0 20px;
    background: #5f5f5f;
    border-bottom: 1px solid #999;
    color: #fff;
    font-family: 'Liberation Sans', Arial, sans-serif;
    font-size: 17.5px;
    letter-spacing: -.1px;
    -webkit-text-stroke: .4px;
}
.banner p {
    margin: 0 0 2px;
    white-space: nowrap;
}
.banner b {
    color: #f6b53c;
    -webkit-text-stroke: 0;
}
.banner svg {
    width: 20px;
    height: 20px;
    margin-top: -4px;
    stroke: #fff;
    stroke-width: 4.5;
}

/* workspace */
.workspace {
    position: relative;
    height: 1202px;
    border-right: 2px solid #bbb;
}
.scene {
    position: absolute;
    left: 0;
    top: 0;
    width: 2560px;
    height: 1202px;
}
.grid-minor { stroke: #000; stroke-opacity: .065; stroke-width: 1.2; }
.grid-major { stroke: #000; stroke-opacity: .17; stroke-width: 1.4; }
.grid-edge { stroke: #333; stroke-opacity: .6; stroke-width: 1.5; }
.ribbon {
    position: absolute;
    left: 6px;
    top: 5px;
    height: 80px;
    display: flex;
    background: #eaeaea;
}
.group {
    display: flex;
    flex-direction: column;
    align-items: center;
    padding-top: 5px;
    background: #e0e0e0;
    border-right: 2px solid #e9e9e9;
}
.group .icons {
    display: flex;
}
.group .cell {
    width: 52px;
    height: 52px;
    margin: 0 2.75px;
    padding: 5px;
}
.cell svg {
    width: 42px;
    height: 42px;
    filter: drop-shadow(0 1px 1px rgba(0, 0, 0, .3));
}
.cell.on {
    background: #6591b6;
    border: 1px solid #7aa7cc;
    padding: 4px;
}
.group .name {
    display: flex;
    align-items: center;
    gap: 4px;
    line-height: 21px;
}
.group.create .name, .group.modify .name, .group.sketch .name {
    padding-right: 8px;
}
.group .name .down {
    border-width: 7px 4px 0;
    margin-top: -3px;
}
.group.model {
    background: #bfbfbf;
    color: #fff;
    font-weight: 700;
    padding-left: 13px;
}
.model .cell {
    width: 66px;
    padding: 2px 0;
}
.model .cell svg {
    width: 66px;
    filter: none;
}
.model .name .down {
    border-top-color: #fff;
}
.viewcube {
    position: absolute;
    left: 2448px;
    top: 19px;
    width: 86px;
    height: 98px;
}
.cube-back {
    fill: #a5a7a9;
    font-size: 19px;
    font-weight: 700;
}
.cube-bottom {
    fill: #8d8f91;
    font-size: 9px;
    font-weight: 700;
}
.browser {
    position: absolute;
    left: 6px;
    top: 90px;
    width: 554px;
}
.panel-head {
    height: 32px;
    display: flex;
    align-items: center;
    padding: 0 4px 0 5px;
    background: #d7d7d7;
    border: 1px solid #bdbdbd;
    color: #707275;
    font-size: 14.5px;
}
.panel-head span {
    flex: 1;
    padding-left: 15px;
}
.panel-head.comments span {
    padding-left: 29px;
    letter-spacing: .3px;
}
.rewind, .forward {
    width: 14px;
    height: 9px;
    fill: #3a3a3a;
}
.minus {
    width: 13px;
    height: 13px;
    border-radius: 50%;
    background: linear-gradient(#fff, #fff) center / 7px 2px no-repeat #3c3c3c;
}
.minus.plus {
    background: linear-gradient(#fff, #fff) center / 7px 2px no-repeat, linear-gradient(#fff, #fff) center / 2px 7px no-repeat #3c3c3c;
}
.grip {
    width: 4px;
    height: 14px;
    margin-left: 7px;
    border-left: 1px solid #aaa;
    border-right: 1px solid #aaa;
}
.tree-wrap {
    display: flex;
    height: 1041px;
    padding-top: 5px;
}
.tree-scroll {
    width: 8px;
    height: 1004px;
    margin: 2px 0 0 5px;
    border-radius: 0 0 4px 4px;
    background: #c5c7c9;
    display: flex;
    align-items: flex-end;
}
.tree-thumb {
    width: 8px;
    height: 150px;
    border-radius: 4px;
    background: #949494;
}
.tree {
    margin-left: -19px;
    letter-spacing: .1px;
}
.row {
    height: 32px;
    display: flex;
    align-items: center;
}
.row .caret {
    width: 16px;
    height: 18px;
    margin-right: 12px;
}
.row.part {
    letter-spacing: .6px;
}
.chip {
    height: 27px;
    display: flex;
    align-items: center;
    padding-right: 13px;
    background: rgba(205, 205, 205, .88);
    white-space: nowrap;
    line-height: 26px;
}
.chip .strip {
    width: 7px;
    height: 27px;
}
.chip .bulb {
    width: 15px;
    height: 21px;
    margin: 0 17px 0 6px;
}
.chip .icon {
    width: 22px;
    height: 21px;
    margin-right: 16.5px;
}
.chip .link {
    width: 24px;
    height: 22px;
    margin: 0 17px 0 -6px;
}
.chip .edited {
    display: flex;
    align-items: center;
    height: 27px;
    margin: 0 -8px 0 -5px;
    padding: 0 8px 0 5px;
    background: repeating-linear-gradient(120deg, #8499bd 0 3px, transparent 3px 8px) 0 21px / 100% 4px no-repeat;
}
.chip .radio {
    width: 18px;
    height: 18px;
    margin-left: 18px;
    border: 1.5px solid #555;
    border-radius: 50%;
    background: #f5f5f5;
}

/* value box on the canvas */
.float-input {
    position: absolute;
    left: 1409px;
    top: 411px;
    width: 146px;
    height: 31px;
    display: flex;
    align-items: center;
    background: #cacaca;
    box-shadow: 0 4px 14px rgba(0, 0, 0, .4);
    font-size: 14.5px;
}
.dots {
    width: 5px;
    height: 26px;
    margin: 0 21px 0 2px;
    background: radial-gradient(#eee 1px, transparent 1px) 0 0 / 3px 4px;
}
.float-input .field {
    width: 100px;
    height: 25px;
    margin-right: 5px;
    background: #fff;
    box-shadow: 0 0 0 2px #8fb9e6;
    line-height: 24px;
    text-align: center;
}

/* fillet dialog */
.dialog {
    position: absolute;
    left: 2220px;
    top: 250px;
    width: 333px;
    height: 351px;
    display: flex;
    flex-direction: column;
    background: #e1e1e1;
    border: 1px solid #b2b2b2;
    box-shadow: 0 1px 3px rgba(0, 0, 0, .25);
    letter-spacing: .35px;
}
.dialog-head {
    height: 33px;
    display: flex;
    align-items: center;
    padding-right: 5px;
    background: #d7d7d7;
    border-bottom: 2px solid #bcbcbc;
    color: #747679;
}
.dialog-head .grip {
    margin: 0 9px 0 2px;
}
.dialog-head span {
    flex: 1;
    padding-left: 8px;
    font-size: 14.5px;
    letter-spacing: 0;
}
.dialog-body {
    flex: 1;
}
.field-row {
    height: 34.6px;
    display: flex;
    align-items: center;
    padding-left: 14px;
    font-size: 15.5px;
}
.field-row label {
    width: 124px;
}
.field-row.section {
    padding-left: 3px;
    gap: 10px;
}
.right {
    width: 0;
    height: 0;
    border: 6px solid transparent;
    border-left: 8px solid #333;
    border-right: 0;
}
.picker {
    width: 103px;
    height: 31px;
    display: flex;
    align-items: center;
    gap: 5px;
    padding-left: 7px;
    background: #6591b6;
    border: 1px solid #7ba8cf;
    color: #fff;
    font-size: 15px;
    font-weight: 700;
    letter-spacing: -.3px;
    white-space: nowrap;
}
.picker svg {
    width: 14px;
    height: 22px;
}
.clear {
    width: 12px;
    height: 12px;
    margin-left: 13px;
    stroke: #666;
    stroke-width: 2.2;
}
.dropdown {
    width: 174px;
    height: 30px;
    display: flex;
    align-items: center;
    padding: 0 5px 0 1px;
    background: #cfcfcf;
}
.dropdown svg {
    width: 22px;
    height: 22px;
}
.dropdown span {
    flex: 1;
    padding-left: 6px;
    white-space: nowrap;
    letter-spacing: .15px;
}
.text {
    width: 154px;
    height: 22px;
    margin: 0 3px 0 4px;
    padding-left: 3px;
    background: #fff;
    border: 1px solid #c6c6c6;
    line-height: 20px;
}
.check {
    width: 18px;
    height: 18px;
    margin-left: 4px;
    border: 1.5px solid #666;
    border-radius: 4px;
    background: linear-gradient(#c4c4c4, #ededed);
}
.check svg {
    width: 16px;
    height: 16px;
    fill: none;
    stroke: #222;
    stroke-width: 2;
}
.corner {
    width: 30px;
    height: 31px;
    margin-right: 7px;
    padding: 4px 3px;
}
.corner svg {
    width: 23px;
    height: 22px;
}
.corner.on {
    background: #6591b6;
    border: 1px solid #7ba8cf;
    padding: 3px 2px;
}
.dialog-foot {
    height: 48px;
    display: flex;
    align-items: center;
    padding: 0 14px 0 18px;
    gap: 9px;
    background: #d7d7d7;
    border-top: 1px solid #bbb;
}
.info {
    width: 16px;
    height: 16px;
    margin-right: auto;
    border-radius: 50%;
    background: #000;
    color: #fff;
    font: bold 13px/16px 'Liberation Serif', serif;
    text-align: center;
    letter-spacing: 0;
}
.dialog-foot button {
    width: 79px;
    height: 25px;
    padding: 0;
    border: 1px solid #bdbdbd;
    background: #eaeaea;
    color: #6c6e71;
    font: 15.5px 'Open Sans', sans-serif;
    letter-spacing: .3px;
}

/* bottom navigation */
.navbar {
    position: absolute;
    left: 1119px;
    top: 1165px;
    display: flex;
    gap: 9px;
}
.nav-group {
    width: 184px;
    height: 32px;
    display: flex;
    align-items: center;
    gap: 12.3px;
    padding-left: 5px;
    background: #cfcfcf;
}
.nav-group svg {
    width: 22px;
    height: 22px;
}
.nav-group .down {
    margin: 0 -4px 0 -7px;
}
.nav-group.views {
    width: 125px;
    padding-left: 4px;
}
.nav-group.views .down {
    margin: 0 -5px 0 -7.5px;
}

/* timeline */
.timeline {
    height: 67px;
    display: flex;
    flex-direction: column;
    background: #d3d3d3;
    border-top: 2px solid #c4c4c4;
}
.tl-scroll {
    height: 12px;
    margin-left: 5px;
    background: #e0e0e0;
}
.tl-thumb {
    width: 118px;
    height: 11px;
    margin-left: 1321px;
    border-radius: 4px;
    background: #9e9e9e;
}
.tl-main {
    height: 53px;
    display: flex;
    align-items: flex-start;
}
.playback {
    width: 183px;
    display: flex;
    gap: 15.6px;
    padding: 10px 0 0 14px;
}
.playback svg {
    width: 18px;
    height: 20px;
    fill: #4d4d4d;
    overflow: visible;
}
.track {
    display: flex;
    padding: 0 1px 0 6px;
    height: 46px;
    background: linear-gradient(#6f6f6f, #6f6f6f) 0 44px / 100% 2px no-repeat;
}
.run {
    display: flex;
    flex-direction: column;
}
.run .bar {
    height: 7px;
    margin: 0 2.5px;
    background: #f8dba4;
}
.run.pink .bar {
    background: #f3bdc4;
}
.run .bar.hatch {
    background: repeating-linear-gradient(115deg, #444 0 5px, #f8dba4 5px 8px) center / 22px 7px no-repeat #f8dba4;
}
.run .feats {
    display: flex;
}
.feat {
    width: 32px;
    height: 39px;
    padding: 4px 5px 0;
    background: linear-gradient(#6f6f6f, #6f6f6f) 17px 31px / 2px 8px no-repeat;
}
.feat svg {
    width: 22px;
    height: 22px;
}
.feat.mark svg {
    box-shadow: 0 0 0 4px #e6e828;
    background: #e6e828;
}
.feat.faded svg {
    opacity: .25;
}
.marker {
    width: 16px;
    height: 44px;
    margin: 3px 0 0 -9px;
    fill: #666;
}
.gear {
    width: 22px;
    height: 22px;
    margin: 11px 6px 0 auto;
    fill: none;
    stroke: #666;
    stroke-width: 4;
}
```
FILE: script.js
```js
// ribbon groups: name, width, icons, index of the active icon
const groups = [
    ['MODEL', 138, ['model']],
    ['CREATE', 179, ['extrude', 'mirror', 'form']],
    ['MODIFY', 239, ['presspull', 'table', 'combine', 'fillet'], 3],
    ['ASSEMBLE', 110, ['assemble']],
    ['SKETCH', 525, ['sketch', 'project', 'smirror', 'trim', 'extend', 'sfillet', 'circle', 'offset', 'rect']],
    ['CONSTRUCT', 133, ['construct']],
    ['INSPECT', 98, ['inspect']],
    ['INSERT', 93, ['insert']],
    ['MAKE', 78, ['make']],
    ['ADD-INS', 105, ['addins']],
    ['SELECT', 92, ['select']]
];

document.getElementById('ribbon').innerHTML = groups.map(([name, width, icons, on]) => `
    <div class="group ${name.toLowerCase()}" style="width:${width}px">
        <div class="icons">${icons.map((icon, i) => `<div class="cell ${i === on ? 'on' : ''}"><svg><use href="#r-${icon}"/></svg></div>`).join('')}</div>
        <div class="name">${name}<i class="down"></i></div>
    </div>`).join('');

// browser rows: left edge, caret, bulb on, icon, label, colour, edited
const rows = [
    [107, '', 0, 'sketch', 'Sketch73'],
    [107, '', 0, 'sketch', 'Sketch74'],
    [107, '', 0, 'sketch', 'Sketch75'],
    [83, 'caret', 1, 'folder', 'Construction'],
    [83, 'caret', 0, 'asm', 'Bicycle Saddle v5:1', '#d8ef9c'],
    [83, 'caret', 0, 'comp', 'clamp:1', '#a3dbf3'],
    [83, 'caret', 0, 'comp', 'end:1', '#d8ef9c'],
    [83, 'caret', 0, 'comp', 'vertical:1', '#eeaf88'],
    [83, 'caret', 0, 'comp', 'bend:1', '#7f9fe0'],
    [83, 'caret', 0, 'comp', 'M4–91290A164 v1 (1):1', '#e8808a'],
    [83, 'caret', 0, 'comp', 'M4–92497A250 v1 (1):1', '#d9a3e3'],
    [83, 'caret', 0, 'comp', 'clamp (1):1', '#9c9cf0'],
    [83, 'caret', 0, 'comp', 'M4–91290A164 v1 (1):2', '#e8808a'],
    [83, 'caret', 0, 'comp', 'M4–92497A250 v1 (1):2', '#d9a3e3'],
    [77, 'open', 1, 'comp', 'New Mass:1', '#fbd998', true],
    [107, 'caret', 0, 'folder', 'Origin'],
    [101, 'open', 1, 'folder', 'Bodies', '', true],
    [131, '', 0, 'body', 'Body1'],
    [131, '', 0, 'body', 'Body2'],
    [131, '', 0, 'body', 'Body3'],
    [131, '', 0, 'body', 'Body4'],
    [131, '', 1, 'body', 'Body5'],
    [131, '', 0, 'body', 'Body6'],
    [131, '', 0, 'body', 'Body7'],
    [131, '', 1, 'body', 'Body8', '', true],
    [131, '', 1, 'body', 'Body10'],
    [83, 'caret', 1, 'comp', 'M4–92497A250 v1 (1):3', '#d9a3e3'],
    [83, 'caret', 0, 'comp', 'M4–91290A164 v1 (1):3', '#e8808a'],
    [83, 'caret', 1, 'comp', 'M4–92497A250 v1 (1):4', '#d9a3e3'],
    [83, 'caret', 1, 'comp', 'M4–91290A164 v1 (1):4', '#e8808a'],
    [83, 'caret', 1, 'comp', 'M4–92497A250 v1 (1):5', '#d9a3e3'],
    [83, 'caret', 1, 'comp', 'M4–91290A164 v1 (1):5', '#e8808a']
];

document.getElementById('tree').innerHTML = rows.map(([left, caret, on, icon, label, color, edited]) => {
    const body = `<svg class="icon"><use href="#t-${icon}"/></svg>${icon === 'asm' ? '<svg class="link"><use href="#t-link"/></svg>' : ''}<span>${label}</span>`;
    return `<div class="row ${label.startsWith('M4') ? 'part' : ''}" style="padding-left:${left - (caret ? 28 : 0)}px">
        ${caret ? `<svg class="caret"><use href="#t-${caret}"/></svg>` : ''}
        <div class="chip">
            ${color ? `<i class="strip" style="background:${color}"></i>` : ''}
            <svg class="bulb"><use href="#t-bulb${on ? '-on' : ''}"/></svg>
            ${edited ? `<div class="edited">${body}</div>` : body}
            ${label === 'New Mass:1' ? '<i class="radio"></i>' : ''}
        </div>
    </div>`;
}).join('');

// timeline runs: colour letter, then one letter for each feature
const runs = 'ySS pKPP ySS pKK yEE pK yE pK yEE pK yE pK yE pKC yS pKK yV pJJCCK yE pHJJJJK yE pK yEFFF pPK yEEF pKK yF pKK yV pP ySB pKK yV pKK yVFFFFFFBF';
let index = 0;
document.getElementById('track').innerHTML = runs.split(' ').map(run => {
    const start = index;
    const feats = [...run.slice(1)].map(kind => {
        const state = index === 51 ? 'faded' : index === 52 || index === 53 ? 'mark' : '';
        index++;
        return `<div class="feat ${state}"><svg><use href="#${kind === 'K' ? 't-sketch' : 'tl-' + kind}"/></svg></div>`;
    }).join('');
    return `<div class="run ${run[0] === 'p' ? 'pink' : ''}"><div class="bar ${start === 22 ? 'hatch' : ''}"></div><div class="feats">${feats}</div></div>`;
}).join('');

// ground grid, every fifth line is a major one
const slope = 0.0548;
const lean = 0.308;
const edge = x => 593 + slope * x;
let lines = '';
for (let i = 1; i < 48; i++) {
    const y = 593 + 20.36 * i;
    lines += `<line x1="0" y1="${y}" x2="2560" y2="${y + slope * 2560}" class="grid-${i % 5 === 3 ? 'major' : 'minor'}"/>`;
}
for (let k = -32; k < 30; k++) {
    const x = 1500 + 46.8 * k;
    const y = edge(x);
    lines += `<line x1="${x}" y1="${y}" x2="${x - lean * (1400 - y)}" y2="1400" class="grid-${k % 5 === 0 ? 'major' : 'minor'}"/>`;
}
lines += `<line x1="0" y1="${edge(0)}" x2="2560" y2="${edge(2560)}" class="grid-edge"/>`;
document.getElementById('grid').innerHTML = lines;
```
